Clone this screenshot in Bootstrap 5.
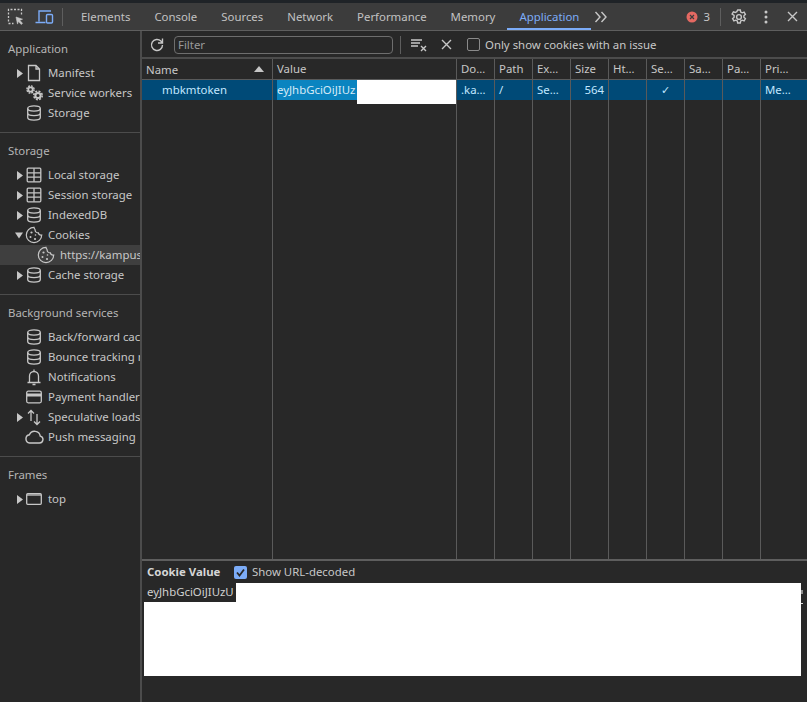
<!DOCTYPE html>
<html lang="en">
<head>
  <meta charset="UTF-8" />
  <meta name="viewport" content="width=device-width, initial-scale=1.0"/>
  <title>DevTools - Application</title>
  <link href="https://cdn.jsdelivr.net/npm/bootstrap@5.3.3/dist/css/bootstrap.min.css" rel="stylesheet" />
  <style>
    html, body { height: 100%; overflow: hidden; }
    body { background: #282828; color: #c7c7c7; font-family: "Noto Sans", sans-serif; font-size: 11.4px; line-height: 20px; }
    svg { display: block; flex: none; }
    .dt-page { height: 702px; width: 807px; padding-top: 3px; background: #1f2327; }
    .dt-top { height: 28px; background: #3c3c3c; border-bottom: 1px solid #5e5e5e; padding-left: 7px; }
    .dt-tab { padding: 0 12px; height: 27px; line-height: 27px; color: #c2c2c2; }
    .dt-tab.on { color: #7cacf8; border-bottom: 2px solid #7cacf8; }
    .dt-vsep { width: 1px; height: 18px; background: #5e5e5e; }
    .dt-main { height: 671px; background: #282828; }
    .dt-side { width: 142px; flex: none; border-right: 2px solid #4c4c4c; overflow: hidden; }
    .dt-group { border-bottom: 1px solid #4c4c4c; padding: 8px 0 9px; }
    .dt-group:last-child { border-bottom: 0; }
    .dt-head { padding-left: 8px; height: 20px; line-height: 19px; color: #b5b5b5; margin-bottom: 4px; }
    .dt-item { height: 20px; line-height: 19px; white-space: nowrap; color: #c7c7c7; overflow: hidden; }
    .dt-item.sel { background: #3f3f3f; }
    .dt-arrow { width: 16px; margin-left: 12px; margin-right: -4px; flex: none; }
    .dt-ico { width: 20px; height: 20px; margin-right: 4px; flex: none; }
    .dt-indent { width: 36px; flex: none; }
    .dt-indent-s { width: 24px; flex: none; }
    .dt-content { min-width: 0; }
    .dt-filter { height: 26px; padding-left: 7px; padding-top: 1px; }
    .dt-input { width: 219px; height: 18px; border: 1px solid #6e6e6e; border-radius: 4px; color: #9a9a9a; padding-left: 3px; line-height: 16px; margin-left: 9px; background: #282828; }
    .dt-box { width: 13px; height: 13px; border: 1px solid #8a8a8a; border-radius: 2px; }
    .dt-grid { flex: 1 1 auto; min-height: 0; border-top: 2px solid #4c4c4c; position: relative; overflow: hidden; }
    .dt-row { display: flex; }
    .dt-c { flex: none; width: 38px; border-right: 1px solid #5a5a5a; padding: 0 4px; white-space: nowrap; overflow: hidden; }
    .dt-c-name { width: 131px; }
    .dt-c-value { width: 184px; }
    .dt-c-last { width: auto; flex: 1 1 auto; border-right: 0; }
    .dt-hrow { height: 21px; background: #282828; border-bottom: 1px solid #5a5a5a; line-height: 19px; }
    .dt-srow { height: 20px; background: #004a77; color: #c2e7ff; line-height: 19px; }
    .dt-c-size { text-align: right; }
    .dt-fill { position: absolute; inset: 41px 0 0 0; display: flex; pointer-events: none; }
    .dt-fill .dt-c { height: 100%; }
    .dt-sel { background: #0a84c0; color: #d5eaf7; display: inline-block; height: 20px; width: 80px; overflow: hidden; }
    .dt-blank { position: absolute; left: 215px; top: 21px; width: 99px; height: 24px; background: #fff; }
    .dt-bottom { height: 143px; flex: none; border-top: 2px solid #5e5e5e; padding-left: 5px; }
    .dt-bhead { height: 22px; }
    .dt-bhead b { color: #d6d6d6; font-weight: 700; width: 87px; }
    .dt-check { width: 13px; height: 13px; border-radius: 2px; background: #7cacf8; margin-right: 5px; }
    .dt-white { width: 657px; height: 93px; margin-left: -3px; background: #fff; position: relative; }
    .dt-white::before { content: ""; position: absolute; left: 100%; top: 7px; width: 2px; height: 4px; background: #8f8f8f; }
    .dt-white::after { content: ""; position: absolute; left: 100%; top: 20px; width: 2px; height: 1px; background: #e0e0e0; }
    .dt-val { background: #282828; width: 92px; height: 19px; padding-left: 3px; line-height: 18px; color: #d0d0d0; white-space: nowrap; overflow: hidden; }
  </style>
</head>
<body>

<svg width="0" height="0" class="position-absolute">
  <symbol id="i-db" viewBox="0 0 20 20"><g fill="none" stroke="#c7c7c7" stroke-width="1.300"><ellipse cx="10" cy="5.500" rx="6.300" ry="2.600"/><path d="M3.700 5.500v9c0 1.500 2.800 2.600 6.300 2.600s6.300-1.100 6.300-2.600v-9M3.700 10c0 1.500 2.800 2.600 6.300 2.600s6.300-1.100 6.300-2.600"/></g></symbol>
  <symbol id="i-table" viewBox="0 0 20 20"><g fill="none" stroke="#c7c7c7" stroke-width="1.300"><rect x="3.200" y="3.200" width="13.600" height="13.600" rx="1"/><path d="M3.200 7.800h13.600M3.200 12.200h13.600M10 3.200v13.600"/></g></symbol>
  <symbol id="i-cookie" viewBox="0 0 20 20"><g fill="none" stroke="#c7c7c7" stroke-width="1.200"><path d="M10 2.300a7.700 7.700 0 1 0 7.700 7.700c-1.800.3-3-.6-3.300-2.200-1.800.2-3.300-1-3.300-2.900C11 4 10 3.300 10 2.300z"/></g><g fill="#c7c7c7"><circle cx="7.500" cy="7.500" r="1.100"/><circle cx="6.500" cy="12" r="1"/><circle cx="11" cy="14" r="1.100"/><circle cx="11.500" cy="10" r=".8"/></g></symbol>
  <symbol id="i-right" viewBox="0 0 16 20"><path d="M5 6l6 4.500-6 4.500z" fill="#c7c7c7"/></symbol>
  <symbol id="i-down" viewBox="0 0 16 20"><path d="M3 7.500h8l-4 6z" fill="#c7c7c7"/></symbol>
</svg>

<div class="dt-page d-flex flex-column">
  <!-- main tab strip -->
  <div class="dt-top d-flex align-items-center">
    <svg width="18" height="18" viewBox="0 0 18 18"><g fill="none" stroke="#c7c7c7" stroke-width="1.300"><path stroke-dasharray="2 1.500" d="M1.500 13.500v-12h13v5"/><path d="M1.500 15.500h5" stroke-dasharray="2 1.500"/><path d="M9 9l6.500 2.200-2.700 1.100 2.700 3-1.200 1.200-2.900-3-.9 2.600z" fill="#c7c7c7" stroke-width=".6"/></g></svg>
    <svg width="20" height="18" viewBox="0 0 20 18" style="margin-left:10px"><g fill="none" stroke="#7cacf8" stroke-width="1.400"><path d="M4 13.500V3h12M.5 14.500h10"/><rect x="11.500" y="6.500" width="6" height="8.500" rx="1"/></g></svg>
    <div class="dt-vsep" style="margin:0 6px 0 7px"></div>
    <div class="dt-tab">Elements</div>
    <div class="dt-tab">Console</div>
    <div class="dt-tab">Sources</div>
    <div class="dt-tab">Network</div>
    <div class="dt-tab">Performance</div>
    <div class="dt-tab">Memory</div>
    <div class="dt-tab on">Application</div>
    <svg width="14" height="12" viewBox="0 0 14 12" style="margin-left:3px"><path d="M1.500 1l4.500 5-4.500 5M7.500 1l4.500 5-4.500 5" fill="none" stroke="#c7c7c7" stroke-width="1.400"/></svg>
    <div class="ms-auto d-flex align-items-center">
      <svg width="12" height="12" viewBox="0 0 12 12"><circle cx="6" cy="6" r="5.500" fill="#e46962"/><path d="M4 4l4 4M8 4l-4 4" stroke="#3c3c3c" stroke-width="1.200"/></svg>
      <span style="margin:0 10px 0 5px">3</span>
      <div class="dt-vsep" style="margin-right:10px"></div>
      <svg width="16" height="16" viewBox="0 0 16 16" style="margin-right:17px"><g fill="none" stroke="#c7c7c7" stroke-width="1.400"><circle cx="8" cy="8" r="2.400"/><path d="M6.700 1h2.600l.4 2 1.500.8 1.900-.7 1.300 2.300-1.500 1.300v1.600l1.500 1.300-1.300 2.300-1.900-.7-1.500.8-.4 2H6.700l-.4-2-1.500-.8-1.900.7-1.300-2.300 1.500-1.300V6.400L1.100 5.100l1.300-2.300 1.900.7 1.500-.8z"/></g></svg>
      <svg width="4" height="14" viewBox="0 0 4 14" style="margin-right:19px"><g fill="#c7c7c7"><circle cx="2" cy="2" r="1.500"/><circle cx="2" cy="7" r="1.500"/><circle cx="2" cy="12" r="1.500"/></g></svg>
      <svg width="11" height="11" viewBox="0 0 11 11" style="margin-right:9px"><path d="M1 1l9 9M10 1l-9 9" stroke="#c7c7c7" stroke-width="1.400"/></svg>
    </div>
  </div>

  <div class="dt-main d-flex">
    <!-- sidebar -->
    <div class="dt-side">
      <div class="dt-group">
        <div class="dt-head">Application</div>
        <div class="dt-item d-flex"><svg class="dt-arrow" viewBox="0 0 16 20"><use href="#i-right"/></svg><svg class="dt-ico" viewBox="0 0 20 20"><path d="M4.500 2.500h7.500l3.500 3.500v11.500h-11z M12 2.500V6h3.500" fill="none" stroke="#c7c7c7" stroke-width="1.300"/></svg>Manifest</div>
        <div class="dt-item d-flex"><span class="dt-indent-s"></span><svg class="dt-ico" viewBox="0 0 20 20"><g fill="none" stroke="#c7c7c7"><circle cx="6.500" cy="6.500" r="2.200" stroke-width="1.800"/><circle cx="6.500" cy="6.500" r="3.600" stroke-width="1.400" stroke-dasharray="1.800 1.030"/><circle cx="14" cy="12.500" r="2.600" stroke-width="2"/><circle cx="14" cy="12.500" r="4.200" stroke-width="1.600" stroke-dasharray="2 1.300"/></g></svg>Service workers</div>
        <div class="dt-item d-flex"><span class="dt-indent-s"></span><svg class="dt-ico"><use href="#i-db"/></svg>Storage</div>
      </div>
      <div class="dt-group">
        <div class="dt-head">Storage</div>
        <div class="dt-item d-flex"><svg class="dt-arrow" viewBox="0 0 16 20"><use href="#i-right"/></svg><svg class="dt-ico"><use href="#i-table"/></svg>Local storage</div>
        <div class="dt-item d-flex"><svg class="dt-arrow" viewBox="0 0 16 20"><use href="#i-right"/></svg><svg class="dt-ico"><use href="#i-table"/></svg>Session storage</div>
        <div class="dt-item d-flex"><svg class="dt-arrow" viewBox="0 0 16 20"><use href="#i-right"/></svg><svg class="dt-ico"><use href="#i-db"/></svg>IndexedDB</div>
        <div class="dt-item d-flex"><svg class="dt-arrow" viewBox="0 0 16 20"><use href="#i-down"/></svg><svg class="dt-ico"><use href="#i-cookie"/></svg>Cookies</div>
        <div class="dt-item sel d-flex"><span class="dt-indent"></span><svg class="dt-ico"><use href="#i-cookie"/></svg>https://kampus-merdeka</div>
        <div class="dt-item d-flex"><svg class="dt-arrow" viewBox="0 0 16 20"><use href="#i-right"/></svg><svg class="dt-ico"><use href="#i-db"/></svg>Cache storage</div>
      </div>
      <div class="dt-group">
        <div class="dt-head">Background services</div>
        <div class="dt-item d-flex"><span class="dt-indent-s"></span><svg class="dt-ico"><use href="#i-db"/></svg>Back/forward cache</div>
        <div class="dt-item d-flex"><span class="dt-indent-s"></span><svg class="dt-ico"><use href="#i-db"/></svg>Bounce tracking mitigations</div>
        <div class="dt-item d-flex"><span class="dt-indent-s"></span><svg class="dt-ico" viewBox="0 0 20 20"><path d="M5.500 15v-6a4.500 4.500 0 0 1 9 0v6M3.500 15.500h13M8.500 17.500h3M10 2.500v2" fill="none" stroke="#c7c7c7" stroke-width="1.300"/></svg>Notifications</div>
        <div class="dt-item d-flex"><span class="dt-indent-s"></span><svg class="dt-ico" viewBox="0 0 20 20"><rect x="2.700" y="4.200" width="14.600" height="11.600" rx="1.500" fill="none" stroke="#c7c7c7" stroke-width="1.300"/><rect x="3" y="6.500" width="14" height="3" fill="#c7c7c7"/></svg>Payment handler</div>
        <div class="dt-item d-flex"><svg class="dt-arrow" viewBox="0 0 16 20"><use href="#i-right"/></svg><svg class="dt-ico" viewBox="0 0 20 20"><path d="M7 14V3.500M4 6.500l3-3 3 3M13 7v10.500M10 14.500l3 3 3-3" fill="none" stroke="#c7c7c7" stroke-width="1.300"/></svg>Speculative loads</div>
        <div class="dt-item d-flex"><span class="dt-indent-s"></span><svg class="dt-ico" viewBox="0 0 20 20"><path d="M6 15.500h9a3.200 3.200 0 0 0 .7-6.300A5.200 5.200 0 0 0 5.800 8 3.800 3.800 0 0 0 6 15.500z" fill="none" stroke="#c7c7c7" stroke-width="1.300" transform="translate(-1 -1) scale(1.100)"/></svg>Push messaging</div>
      </div>
      <div class="dt-group">
        <div class="dt-head">Frames</div>
        <div class="dt-item d-flex"><svg class="dt-arrow" viewBox="0 0 16 20"><use href="#i-right"/></svg><svg class="dt-ico" viewBox="0 0 20 20"><rect x="2.700" y="4.700" width="14.600" height="10.600" rx="1" fill="none" stroke="#c7c7c7" stroke-width="1.300"/><path d="M3 6h14" stroke="#c7c7c7" stroke-width="1.300"/></svg>top</div>
      </div>
    </div>

    <!-- cookie table -->
    <div class="dt-content flex-grow-1 d-flex flex-column">
      <div class="dt-filter d-flex align-items-center">
        <svg width="16" height="16" viewBox="0 0 16 16"><path d="M13.500 8a5.500 5.500 0 1 1-1.600-3.900L13.500 6M13.500 1.500V6H9" fill="none" stroke="#c7c7c7" stroke-width="1.400"/></svg>
        <div class="dt-input">Filter</div>
        <div class="dt-vsep" style="margin:0 10px 0 7px"></div>
        <svg width="16" height="14" viewBox="0 0 16 14"><path d="M0 2h11M0 5h9M0 8h7" stroke="#c7c7c7" stroke-width="1.400"/><path d="M10 8l5 5M15 8l-5 5" stroke="#c7c7c7" stroke-width="1.400"/></svg>
        <svg width="11" height="11" viewBox="0 0 11 11" style="margin-left:14px"><path d="M1 1l9 9M10 1l-9 9" stroke="#c7c7c7" stroke-width="1.400"/></svg>
        <div class="dt-box" style="margin:0 5px 0 15px"></div>
        <span>Only show cookies with an issue</span>
      </div>
      <div class="dt-grid flex-grow-1">
        <div class="dt-fill">
          <div class="dt-c dt-c-name"></div><div class="dt-c dt-c-value"></div>
          <div class="dt-c"></div><div class="dt-c"></div><div class="dt-c"></div><div class="dt-c"></div><div class="dt-c"></div><div class="dt-c"></div><div class="dt-c"></div><div class="dt-c"></div>
        </div>
        <div class="dt-row dt-hrow">
          <div class="dt-c dt-c-name d-flex justify-content-between align-items-center">Name <svg width="10" height="6" viewBox="0 0 10 6" class="me-1"><path d="M0 6l5-6 5 6z" fill="#c7c7c7"/></svg></div>
          <div class="dt-c dt-c-value">Value</div>
          <div class="dt-c">Do…</div><div class="dt-c">Path</div><div class="dt-c">Ex…</div><div class="dt-c">Size</div><div class="dt-c">Ht…</div><div class="dt-c">Se…</div><div class="dt-c">Sa…</div><div class="dt-c">Pa…</div><div class="dt-c dt-c-last">Pri…</div>
        </div>
        <div class="dt-row dt-srow">
          <div class="dt-c dt-c-name" style="padding-left:20px">mbkmtoken</div>
          <div class="dt-c dt-c-value"><span class="dt-sel">eyJhbGciOiJIUz</span></div>
          <div class="dt-c">.ka…</div><div class="dt-c">/</div><div class="dt-c">Se…</div><div class="dt-c dt-c-size">564</div><div class="dt-c"></div><div class="dt-c text-center">✓</div><div class="dt-c"></div><div class="dt-c"></div><div class="dt-c dt-c-last">Me…</div>
        </div>
        <div class="dt-blank"></div>
      </div>
      <div class="dt-bottom">
        <div class="dt-bhead d-flex align-items-center">
          <b>Cookie Value</b>
          <svg class="dt-check" viewBox="0 0 13 13"><path d="M3 6.500l2.500 3L10 3.500" fill="none" stroke="#282828" stroke-width="1.800"/></svg>
          <span>Show URL-decoded</span>
        </div>
        <div class="dt-white"><div class="dt-val">eyJhbGciOiJIUzU</div></div>
      </div>
    </div>
  </div>
</div>

</body>
</html>
